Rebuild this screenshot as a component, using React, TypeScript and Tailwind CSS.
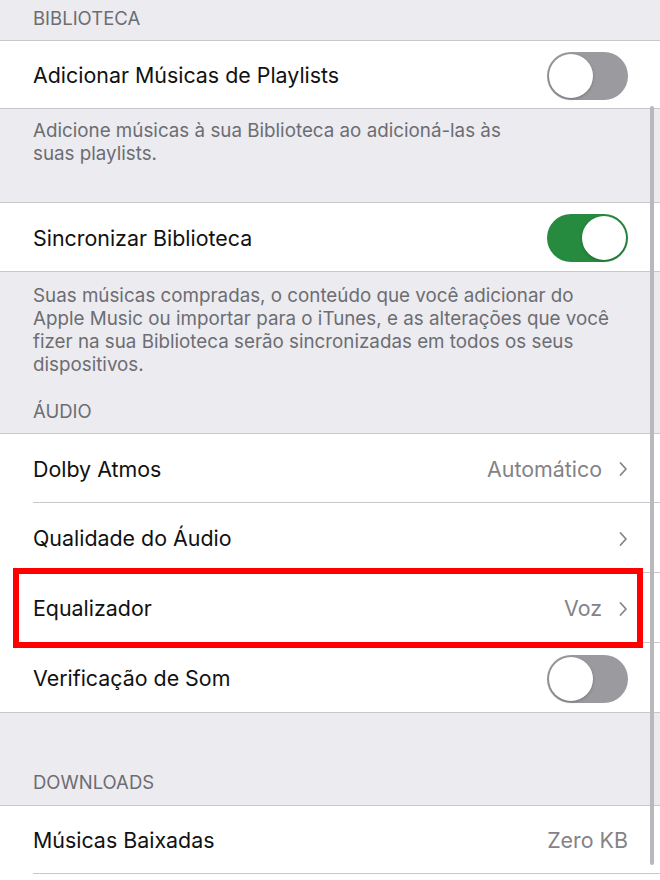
import type { ReactNode } from 'react';

const FONT = "font-['Inter','Liberation_Sans',sans-serif]";

function Toggle({ on }: { on: boolean }) {
  return (
    <div
      className={
        'relative h-[48px] w-[81px] rounded-full ' +
        (on ? 'bg-[#268a3f]' : 'bg-[#9a9a9f]')
      }
    >
      <div
        className={
          'absolute top-[2px] h-[44px] w-[44px] rounded-full bg-white shadow-[0_1px_3px_rgba(0,0,0,0.25)] ' +
          (on ? 'right-[2px]' : 'left-[2px]')
        }
      />
    </div>
  );
}

function Chevron() {
  return (
    <svg width="10" height="16" viewBox="0 0 10 16" className="ml-[16px]">
      <path d="M2.5 2 L8 8 L2.5 14" fill="none" stroke="#858589" strokeWidth="1.8" strokeLinecap="round" strokeLinejoin="round" />
    </svg>
  );
}

function Row({
  label,
  children,
  last,
  h = 'h-[69px]',
}: {
  label: string;
  children?: ReactNode;
  last?: boolean;
  h?: string;
}) {
  return (
    <div className="bg-white">
      <div className={'flex items-center pl-[33px] pr-[32px] pt-[2px] ' + h}>
        <span className="flex-1 text-[21.4px] text-[#111]">{label}</span>
        {children}
      </div>
      {!last && <div className="ml-[33px] h-px bg-[#c8c7cc]" />}
    </div>
  );
}

function Value({ text }: { text: string }) {
  return <span className="text-[21.4px] text-[#838387]">{text}</span>;
}

function Line() {
  return <div className="h-px bg-[#c8c7cc]" />;
}

export default function App() {
  return (
    <div className={'relative w-[660px] h-[880px] overflow-hidden bg-[#ebebf0] ' + FONT}>
      <div className="h-[40px] pl-[33px] pt-[7px] text-[18.5px] leading-[23px] text-[#6d6d72]">BIBLIOTECA</div>
      <Line />
      <Row label="Adicionar Músicas de Playlists" last h="h-[67px]">
        <Toggle on={false} />
      </Row>
      <Line />
      <div className="h-[93px] pl-[33px] pr-[30px] pt-[10px] text-[18.8px] leading-[23px] text-[#6d6d72]">
        Adicione músicas à sua Biblioteca ao adicioná-las às
        <br />
        suas playlists.
      </div>
      <Line />
      <Row label="Sincronizar Biblioteca" last h="h-[68px]">
        <Toggle on />
      </Row>
      <Line />
      <div className="h-[161px] pl-[33px] pr-[20px] pt-[12px] text-[18.8px] leading-[23px] text-[#6d6d72]">
        <p>
          Suas músicas compradas, o conteúdo que você adicionar do
          <br />
          Apple Music ou importar para o iTunes, e as alterações que você
          <br />
          fizer na sua Biblioteca serão sincronizadas em todos os seus
          <br />
          dispositivos.
        </p>
        <p className="mt-[24px] text-[18.5px]">ÁUDIO</p>
      </div>
      <Line />
      <Row label="Dolby Atmos" h="h-[68px]">
        <Value text="Automático" />
        <Chevron />
      </Row>
      <Row label="Qualidade do Áudio">
        <Chevron />
      </Row>
      <div className="relative">
        <Row label="Equalizador">
          <Value text="Voz" />
          <Chevron />
        </Row>
        <div className="pointer-events-none absolute left-[13px] right-[17px] top-[-5px] bottom-[-5px] border-[6px] border-[#ff0000]" />
      </div>
      <Row label="Verificação de Som" last>
        <Toggle on={false} />
      </Row>
      <Line />
      <div className="flex h-[92px] items-end pb-[11px] pl-[33px] text-[18.5px] leading-[23px] text-[#6d6d72]">
        DOWNLOADS
      </div>
      <Line />
      <Row label="Músicas Baixadas" h="h-[67px]">
        <Value text="Zero KB" />
      </Row>
      <div className="h-[20px] bg-white" />
      <div className="absolute right-[6px] top-[106px] h-[759px] w-[4px] rounded-full bg-[#b9b9bd]" />
    </div>
  );
}
